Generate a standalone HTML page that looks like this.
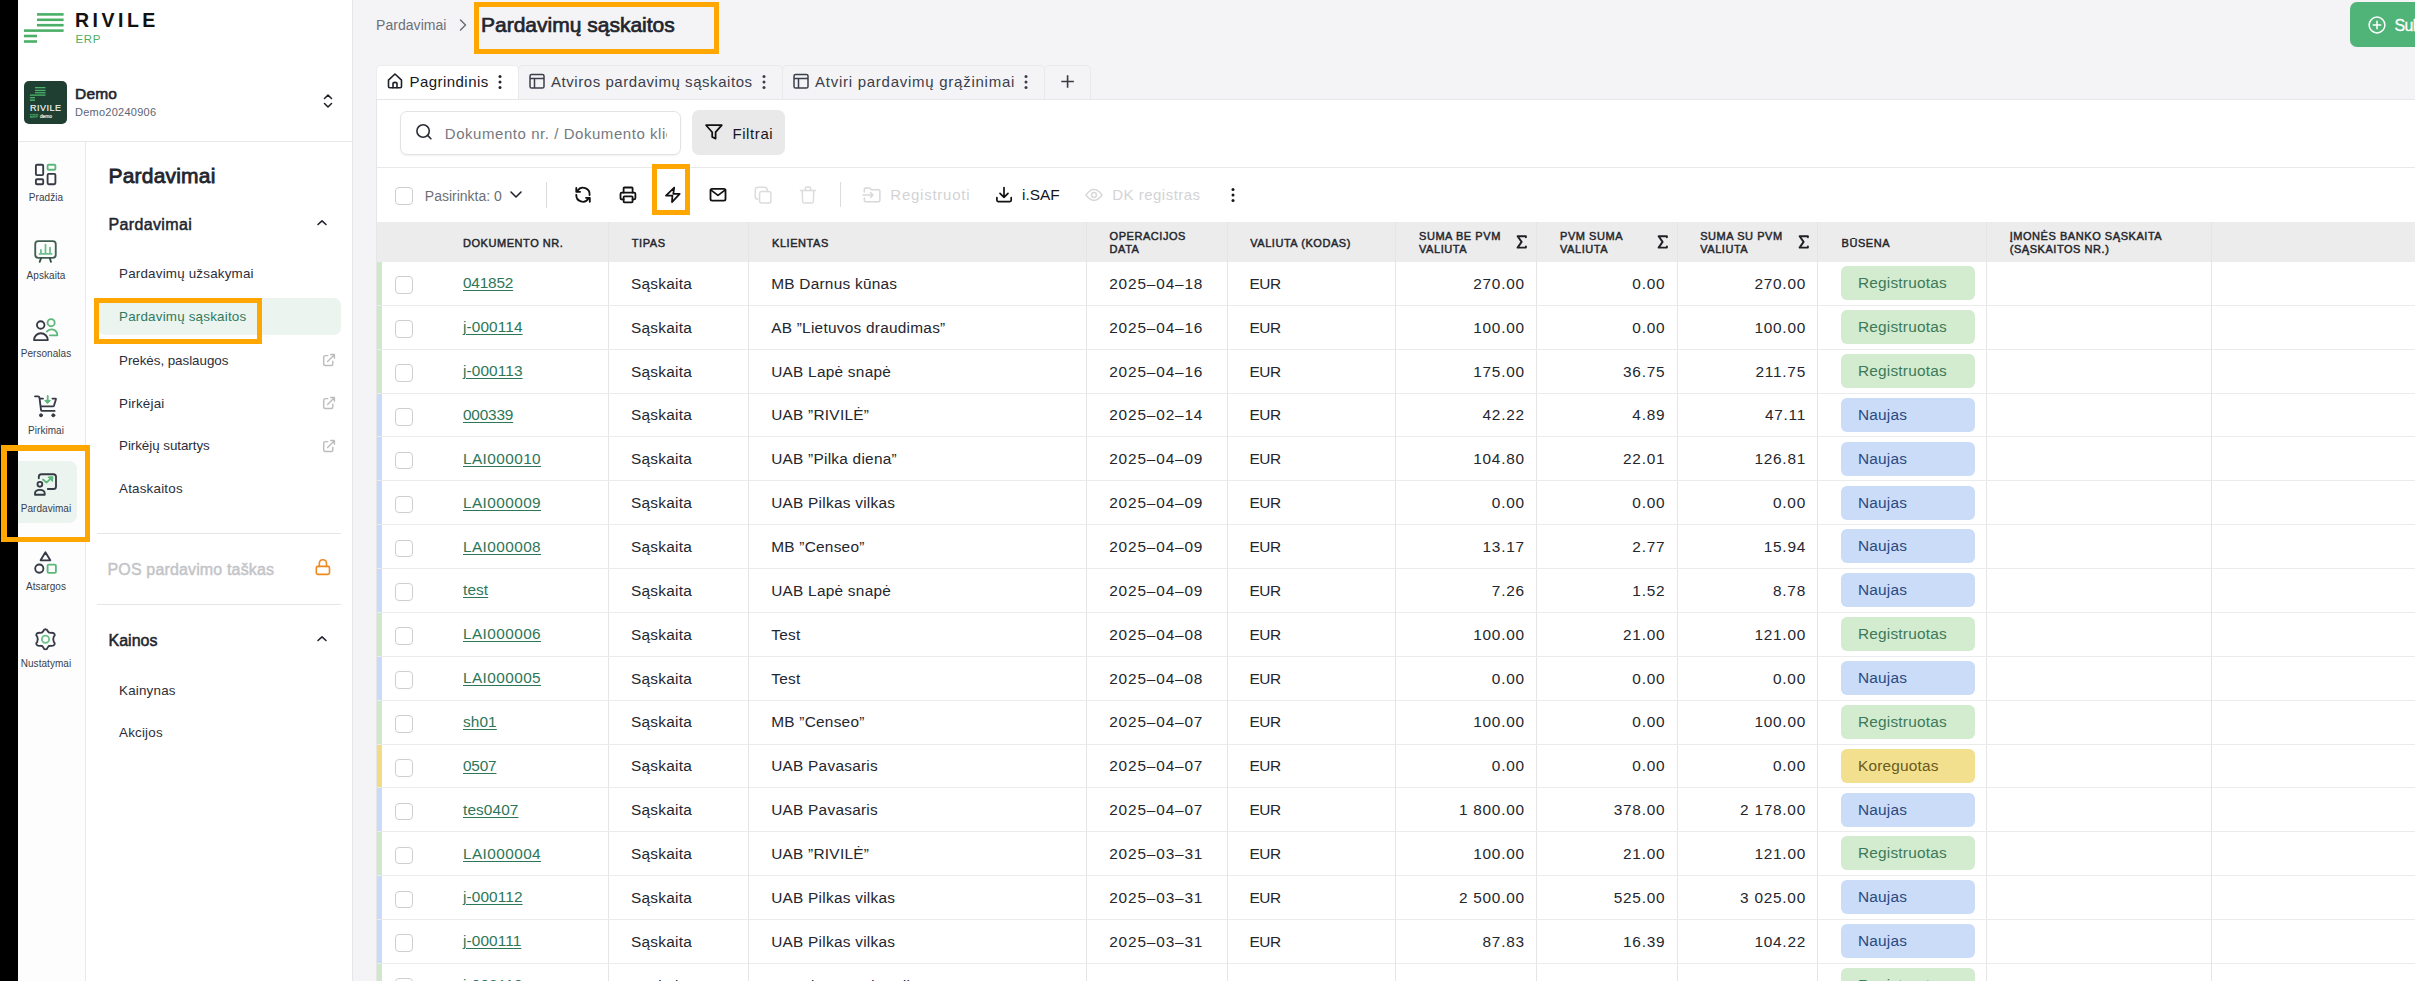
<!DOCTYPE html>
<html><head><meta charset="utf-8"><title>Pardavimų sąskaitos</title>
<style>
*{box-sizing:border-box}
html,body{margin:0;padding:0}
body{width:2415px;height:981px;overflow:hidden;position:relative;background:#f4f4f6;font-family:"Liberation Sans",sans-serif;color:#22252e}
.abs{position:absolute}
#blk{position:absolute;left:0;top:0;width:18px;height:981px;background:#000}
#side{position:absolute;left:18px;top:0;width:335px;height:981px;background:#fff;border-right:1px solid #e6e6e8}
#logoline{position:absolute;left:18px;top:141px;width:334px;height:1px;background:#e8e8ea}
#rail{position:absolute;left:18px;top:142px;width:68px;height:839px;background:#fdfdfd;border-right:1px solid #eaeaea}
.ri{position:absolute}
.rl{position:absolute;left:12.5px;width:67px;text-align:center;font-size:10px;color:#3a3e4a;line-height:14px;letter-spacing:0.05px}
.mi{position:absolute;left:119px;font-size:13.4px;color:#2a2e3a;line-height:16px;white-space:nowrap;letter-spacing:0.2px}
.ext{position:absolute;left:322px}
.ob{position:absolute;border:5px solid #ffa600}
#panel{position:absolute;left:376px;top:99px;width:2040px;height:882px;background:#fff;border-left:1px solid #e6e6e8;border-top:1px solid #e6e6e8}
.tab{position:absolute;top:65px;height:34.5px;border:1px solid #e9e9eb;border-bottom:none;border-radius:5px 5px 0 0;background:#f4f4f6}
.tabt{position:absolute;top:73px;font-size:15px;line-height:18px;color:#3b3e4b;white-space:nowrap;letter-spacing:0.55px}
.thead{position:absolute;left:377px;width:2038px;background:#ececec}
.th{position:absolute;font-size:11px;font-weight:400;-webkit-text-stroke:0.45px #24262c;letter-spacing:0.55px;line-height:13px;color:#24262c;white-space:nowrap}
.sig{position:absolute;font-size:18.5px;line-height:20px;color:#24262c}
.vd{position:absolute;width:1px;background:#e5e5e5}
.row{position:absolute;left:377px;width:2038px}
.bar{position:absolute;left:0;top:0;width:5px;height:100%}
.rb{position:absolute;left:0;bottom:0;width:100%;height:1px;background:#ebebeb}
.cb{position:absolute;left:18.3px;top:14.4px;width:17.6px;height:17.6px;border:1px solid #cfcfd1;border-radius:4px;background:#fff}
.c{position:absolute;top:12.8px;font-size:15.4px;line-height:18px;color:#24262e;white-space:nowrap;letter-spacing:0.25px}
.c.r{letter-spacing:0.75px}
.c.eur{letter-spacing:-0.4px}
.c.dt{letter-spacing:0.85px}
.c.lnk{color:#2e7658;text-decoration:underline;text-decoration-thickness:1px;text-underline-offset:1.6px;letter-spacing:-0.2px;top:12.3px}
.badge{position:absolute;left:1464px;top:4.2px;width:134px;height:34px;border-radius:6px;font-size:15.4px;line-height:34px;padding-left:17px;letter-spacing:0.2px}
.ic{position:absolute}
</style></head><body>
<div id="blk"></div>
<div id="side"></div>
<div id="logoline"></div>
<!-- logo -->
<svg class="abs" style="left:22px;top:11px" width="44" height="34" viewBox="0 0 44 34">
<g fill="#4caf67">
<rect x="15" y="2.1" width="26.6" height="2.6"/>
<rect x="15" y="7.5" width="26.6" height="2.6"/>
<rect x="15" y="12.9" width="26.6" height="2.6"/>
<rect x="2" y="18.3" width="39.6" height="2.6"/>
<rect x="2" y="23.7" width="13" height="2.6"/>
<rect x="2" y="29.2" width="13" height="2.6"/>
</g></svg>
<div class="abs" style="left:75px;top:9px;font-size:19.5px;font-weight:700;letter-spacing:3.5px;color:#111;line-height:22px">RIVILE</div>
<div class="abs" style="left:75.5px;top:32px;font-size:11.5px;letter-spacing:0.6px;color:#4caf67;line-height:14px">ERP</div>
<!-- company -->
<div class="abs" style="left:24px;top:81px;width:43px;height:43px;border-radius:5px;background:#1e3f31"></div>
<svg class="abs" style="left:24px;top:81px" width="43" height="43" viewBox="0 0 43 43">
<g fill="#4caf6a"><rect x="11" y="6" width="10.5" height="1.3"/><rect x="11" y="8.8" width="10.5" height="1.3"/><rect x="11" y="11.1" width="10.5" height="1.3"/><rect x="5.9" y="13.3" width="15.6" height="1.7" fill="#3f9a5c"/><rect x="5.9" y="16" width="5.1" height="1.3"/><rect x="5.9" y="18.4" width="5.1" height="1.5"/></g>
<text x="5.9" y="29.9" font-family="Liberation Sans" font-weight="400" font-size="9" textLength="31.2" lengthAdjust="spacing" fill="#eef2ef" stroke="#eef2ef" stroke-width="0.2">RIVILE</text>
<text x="5.9" y="36.9" font-family="Liberation Sans" font-weight="400" font-size="5.2" textLength="8.3" lengthAdjust="spacingAndGlyphs" fill="#4caf6a" stroke="#4caf6a" stroke-width="0.2">ERP</text><text x="15.9" y="36.9" font-family="Liberation Sans" font-weight="400" font-size="5.6" textLength="12.2" lengthAdjust="spacingAndGlyphs" fill="#e8efe9" stroke="#e8efe9" stroke-width="0.2">demo</text>
</svg>
<div class="abs" style="left:75px;top:84.5px;font-size:15.5px;font-weight:400;-webkit-text-stroke:0.6px #22252e;color:#22252e;line-height:17px;letter-spacing:0.2px">Demo</div>
<div class="abs" style="left:75px;top:106px;font-size:11px;color:#5d6576;line-height:13px;letter-spacing:0.25px">Demo20240906</div>
<svg class="abs" style="left:321px;top:92px" width="14" height="18" viewBox="0 0 14 18" fill="none" stroke="#1d1f24" stroke-width="1.5" stroke-linecap="round" stroke-linejoin="round"><path d="M3.5 6.5 L7 3 L10.5 6.5 M3.5 11.5 L7 15 L10.5 11.5"/></svg>
<div id="rail"></div>
<div class="abs" style="left:18px;top:461px;width:59px;height:62px;background:#ecf4ef;border-radius:0 8px 8px 0"></div>
<svg class="ri" style="left:28px;top:155px" width="36" height="36" viewBox="0 0 36 36" fill="none" stroke-width="1.85" stroke-linejoin="round">
<rect x="7.9" y="9.7" width="7.3" height="10.4" rx="1.1" stroke="#363a45"/>
<rect x="7.9" y="24.2" width="7.3" height="5" rx="1" stroke="#363a45"/>
<rect x="19.6" y="9.7" width="7.8" height="5" rx="1" stroke="#5cb87a"/>
<rect x="19.6" y="18.9" width="7.8" height="10.3" rx="1.1" stroke="#363a45"/>
</svg>
<svg class="ri" style="left:28px;top:233px" width="36" height="36" viewBox="0 0 36 36" fill="none" stroke-width="1.85" stroke-linecap="round" stroke-linejoin="round">
<rect x="7.25" y="8.05" width="20.5" height="16.8" rx="3" stroke="#3f5f51"/>
<path d="M13 25.2 L11.7 28.9 M21.8 25.2 L23 28.9" stroke="#2f4e40" stroke-width="1.8"/>
<path d="M11.6 20.9 H23.6 M12.9 20.9 V17 M17.5 20.9 V11.6 M22 20.9 V14.6" stroke="#6cc08a" stroke-width="1.8"/>
</svg>
<svg class="ri" style="left:28px;top:312px" width="36" height="36" viewBox="0 0 36 36" fill="none" stroke-width="1.85" stroke-linecap="round" stroke-linejoin="round">
<circle cx="12.7" cy="13" r="3.75" stroke="#363a45"/>
<path d="M6 28.1 H19.8 A6.9 6.9 0 0 0 6 28.1 Z" stroke="#363a45"/>
<circle cx="23.1" cy="10.7" r="3.55" stroke="#5cb87a"/>
<path d="M18.8 19.6 A5.9 5.9 0 0 1 29.3 23.3 H21.9" stroke="#5cb87a"/>
</svg>
<svg class="ri" style="left:28px;top:388px" width="36" height="36" viewBox="0 0 36 36" fill="none" stroke-width="1.85" stroke-linecap="round" stroke-linejoin="round">
<path d="M7 8.3 H10 Q11.3 8.3 11.5 9.8 L13 22 Q13.2 22.9 14.2 22.9 H26.6" stroke="#363a45"/>
<path d="M12 10.6 H15 M24.4 10.6 H27.4 Q28.1 10.6 27.9 11.4 L26 17.6 Q25.7 18.3 25 18.3 H13.1" stroke="#363a45"/>
<circle cx="13" cy="27.3" r="1.5" fill="#363a45" stroke="#363a45" stroke-width="1"/>
<circle cx="25.3" cy="27.3" r="1.5" fill="#363a45" stroke="#363a45" stroke-width="1"/>
<path d="M19.7 7.8 V13.5" stroke="#5cb87a" stroke-width="1.8"/>
<path d="M17.1 12.4 H22.3 L19.7 15.4 Z" fill="#5cb87a" stroke="#5cb87a" stroke-width="1"/>
</svg>
<svg class="ri" style="left:28px;top:466px" width="36" height="36" viewBox="0 0 36 36" fill="none" stroke-width="1.85" stroke-linecap="round" stroke-linejoin="round">
<path d="M10.8 12.2 V10.8 Q10.8 8.2 13.4 8.2 H25.4 Q28 8.2 28 10.8 V20.4 Q28 23 25.4 23 H19.8" stroke="#363a45"/>
<circle cx="11.9" cy="18.3" r="2.4" stroke="#363a45"/>
<path d="M7 28.7 V27.6 Q7 23.9 11.9 23.9 Q16.7 23.9 16.7 27.6 V28.7 Z" stroke="#363a45"/>
<path d="M15 13.5 L18.5 16.6 L23.5 11.8" stroke="#5cb87a" stroke-width="1.8"/>
<path d="M20.3 11 L24.9 10.7 L24.5 15.2 Z" fill="#5cb87a" stroke="#5cb87a" stroke-width="1"/>
</svg>
<svg class="ri" style="left:28px;top:544px" width="36" height="36" viewBox="0 0 36 36" fill="none" stroke-width="1.85" stroke-linecap="round" stroke-linejoin="round">
<path d="M17.4 8.2 L22.3 16.3 H12.6 Z" stroke="#363a45"/>
<circle cx="11.3" cy="24.6" r="4.1" stroke="#363a45"/>
<rect x="19.6" y="20.6" width="8.3" height="8.3" rx="1.2" stroke="#5cb87a"/>
</svg>
<svg class="ri" style="left:28px;top:621px" width="36" height="36" viewBox="0 0 36 36" fill="none" stroke-width="1.85" stroke-linecap="round" stroke-linejoin="round">
<path d="M17.5 8.2 Q19.2 8.2 19.6 10 Q20.5 11.9 22.6 11.8 Q25.8 11.4 26.6 13.2 Q27.2 14.6 25.8 15.6 Q24.5 18.3 25.8 21 Q27.2 22 26.6 23.4 Q25.8 25.2 22.6 24.8 Q20.5 24.7 19.6 26.6 Q19.2 28.4 17.5 28.4 Q15.8 28.4 15.4 26.6 Q14.5 24.7 12.4 24.8 Q9.2 25.2 8.4 23.4 Q7.8 22 9.2 21 Q10.5 18.3 9.2 15.6 Q7.8 14.6 8.4 13.2 Q9.2 11.4 12.4 11.8 Q14.5 11.9 15.4 10 Q15.8 8.2 17.5 8.2 Z" stroke="#363a45"/>
<circle cx="17.5" cy="18.3" r="3.6" stroke="#6cc08a" stroke-width="1.8"/>
</svg>
<div class="rl" style="top:190.9px">Pradžia</div>
<div class="rl" style="top:268.9px">Apskaita</div>
<div class="rl" style="top:346.9px">Personalas</div>
<div class="rl" style="top:423.9px">Pirkimai</div>
<div class="rl" style="top:501.9px">Pardavimai</div>
<div class="rl" style="top:579.9px">Atsargos</div>
<div class="rl" style="top:656.9px">Nustatymai</div>
<!-- menu -->
<div class="abs" style="left:108.5px;top:165.2px;font-size:21px;font-weight:400;-webkit-text-stroke:0.8px #22252e;color:#22252e;line-height:22px;letter-spacing:0.2px">Pardavimai</div>
<div class="abs" style="left:108.5px;top:216px;font-size:16px;font-weight:400;-webkit-text-stroke:0.5px #22252e;color:#22252e;line-height:17px;letter-spacing:0.35px">Pardavimai</div>
<svg class="abs" style="left:314px;top:217px" width="16" height="12" viewBox="0 0 16 12" fill="none" stroke="#22252e" stroke-width="1.6" stroke-linecap="round" stroke-linejoin="round"><path d="M4 7.5 L8 3.8 L12 7.5"/></svg>
<div class="mi" style="top:266px">Pardavimų užsakymai</div>
<div class="abs" style="left:98px;top:298px;width:243px;height:37px;background:#ebf4ef;border-radius:7px"></div>
<div class="mi" style="top:309px;color:#2f7a5e">Pardavimų sąskaitos</div>
<div class="mi" style="top:352.5px;letter-spacing:-0.05px">Prekės, paslaugos</div>
<div class="mi" style="top:395.5px">Pirkėjai</div>
<div class="mi" style="top:438.3px;letter-spacing:-0.05px">Pirkėjų sutartys</div>
<div class="mi" style="top:481.2px">Ataskaitos</div>
<svg class="ext" style="top:352.5px" width="14" height="14" viewBox="0 0 14 14" fill="none" stroke="#bdbdbd" stroke-width="1.45" stroke-linecap="round" stroke-linejoin="round"><path d="M5.8 2.6 H3.2 Q1.7 2.6 1.7 4.1 V10.9 Q1.7 12.4 3.2 12.4 H9.3 Q10.8 12.4 10.8 10.9 V8.3"/><path d="M5.6 8.4 L12.3 1.7 M8.7 1.5 H12.4 V5.2"/></svg><svg class="ext" style="top:395.5px" width="14" height="14" viewBox="0 0 14 14" fill="none" stroke="#bdbdbd" stroke-width="1.45" stroke-linecap="round" stroke-linejoin="round"><path d="M5.8 2.6 H3.2 Q1.7 2.6 1.7 4.1 V10.9 Q1.7 12.4 3.2 12.4 H9.3 Q10.8 12.4 10.8 10.9 V8.3"/><path d="M5.6 8.4 L12.3 1.7 M8.7 1.5 H12.4 V5.2"/></svg><svg class="ext" style="top:438.5px" width="14" height="14" viewBox="0 0 14 14" fill="none" stroke="#bdbdbd" stroke-width="1.45" stroke-linecap="round" stroke-linejoin="round"><path d="M5.8 2.6 H3.2 Q1.7 2.6 1.7 4.1 V10.9 Q1.7 12.4 3.2 12.4 H9.3 Q10.8 12.4 10.8 10.9 V8.3"/><path d="M5.6 8.4 L12.3 1.7 M8.7 1.5 H12.4 V5.2"/></svg>
<div class="abs" style="left:97px;top:533px;width:244px;height:1px;background:#e6e6e8"></div>
<div class="abs" style="left:107.5px;top:561px;font-size:16px;font-weight:400;-webkit-text-stroke:0.45px #c3c4c8;color:#c3c4c8;line-height:18px;letter-spacing:0.15px">POS pardavimo taškas</div>
<svg class="abs" style="left:313px;top:557px" width="19" height="20" viewBox="0 0 19 20" fill="none" stroke="#ef891c" stroke-width="1.6" stroke-linecap="round" stroke-linejoin="round"><rect x="3.3" y="9.4" width="13.2" height="8" rx="1.6"/><path d="M6.3 9.4 V6.8 Q6.3 2.7 9.9 2.7 Q13.5 2.7 13.5 6.8 V9.4"/></svg>
<div class="abs" style="left:97px;top:604px;width:244px;height:1px;background:#e6e6e8"></div>
<div class="abs" style="left:108.5px;top:632px;font-size:16px;font-weight:400;-webkit-text-stroke:0.5px #22252e;color:#22252e;line-height:17px">Kainos</div>
<svg class="abs" style="left:314px;top:633px" width="16" height="12" viewBox="0 0 16 12" fill="none" stroke="#22252e" stroke-width="1.6" stroke-linecap="round" stroke-linejoin="round"><path d="M4 7.5 L8 3.8 L12 7.5"/></svg>
<div class="mi" style="top:682.5px">Kainynas</div>
<div class="mi" style="top:725.3px">Akcijos</div>

<!-- breadcrumb -->
<div class="abs" style="left:376px;top:16.5px;font-size:14px;color:#6d6f76;line-height:17px;letter-spacing:0.05px">Pardavimai</div>
<svg class="abs" style="left:456px;top:17px" width="14" height="16" viewBox="0 0 14 16" fill="none" stroke="#6d6f76" stroke-width="1.5" stroke-linecap="round" stroke-linejoin="round"><path d="M4.5 3 L9.5 8 L4.5 13"/></svg>
<div class="abs" style="left:481px;font-size:21px;font-weight:400;-webkit-text-stroke:0.7px #22252e;color:#22252e;line-height:23px;letter-spacing:0px;top:12.5px">Pardavimų sąskaitos</div>

<!-- create button -->
<div class="abs" style="left:2350px;top:2px;width:120px;height:45px;border-radius:7px;background:#50b478"></div>
<svg class="abs" style="left:2367px;top:15px" width="20" height="20" viewBox="0 0 20 20" fill="none" stroke="#fff" stroke-width="1.5" stroke-linecap="round"><circle cx="10" cy="10" r="7.9"/><path d="M10 6.3 V13.7 M6.3 10 H13.7"/></svg>
<div class="abs" style="left:2394.5px;top:15.5px;font-size:16px;color:#fff;-webkit-text-stroke:0.3px #fff;line-height:19px;letter-spacing:-0.6px;white-space:nowrap">Sukurti</div>

<!-- tabs -->
<div class="tab" style="left:376px;width:142.5px;background:#fff;border-color:#ececee"></div>
<div class="tab" style="left:518px;width:264.5px"></div>
<div class="tab" style="left:782px;width:262.5px"></div>
<div class="tab" style="left:1044px;width:47px"></div>
<svg class="abs" style="left:385px;top:71px" width="20" height="20" viewBox="0 0 20 20" fill="none" stroke="#1f2128" stroke-width="1.6" stroke-linecap="round" stroke-linejoin="round"><path d="M3.5 9.2 L10 3 L16.5 9.2 V15.6 Q16.5 16.8 15.3 16.8 H4.7 Q3.5 16.8 3.5 15.6 Z"/><path d="M8 16.8 V12.8 Q8 11.4 10 11.4 Q12 11.4 12 12.8 V16.8"/></svg>
<div class="tabt" style="left:409.5px;color:#15171c;letter-spacing:0.45px">Pagrindinis</div>
<svg class="abs" style="left:496px;top:73px" width="8" height="18" viewBox="0 0 8 18" fill="#22252e"><circle cx="4" cy="3.5" r="1.5"/><circle cx="4" cy="9" r="1.5"/><circle cx="4" cy="14.5" r="1.5"/></svg>
<svg class="abs" style="left:527px;top:72px" width="20" height="18" viewBox="0 0 20 18" fill="none" stroke="#3b3e4b" stroke-width="1.5" stroke-linejoin="round"><rect x="3" y="2.5" width="14" height="13.5" rx="1.6"/><path d="M3 6.5 H17 M7.5 6.5 V16"/></svg>
<div class="tabt" style="left:551px">Atviros pardavimų sąskaitos</div>
<svg class="abs" style="left:760px;top:73px" width="8" height="18" viewBox="0 0 8 18" fill="#3b3e4b"><circle cx="4" cy="3.5" r="1.5"/><circle cx="4" cy="9" r="1.5"/><circle cx="4" cy="14.5" r="1.5"/></svg>
<svg class="abs" style="left:791px;top:72px" width="20" height="18" viewBox="0 0 20 18" fill="none" stroke="#3b3e4b" stroke-width="1.5" stroke-linejoin="round"><rect x="3" y="2.5" width="14" height="13.5" rx="1.6"/><path d="M3 6.5 H17 M7.5 6.5 V16"/></svg>
<div class="tabt" style="left:815px;letter-spacing:0.74px">Atviri pardavimų grąžinimai</div>
<svg class="abs" style="left:1021.5px;top:73px" width="8" height="18" viewBox="0 0 8 18" fill="#3b3e4b"><circle cx="4" cy="3.5" r="1.5"/><circle cx="4" cy="9" r="1.5"/><circle cx="4" cy="14.5" r="1.5"/></svg>
<svg class="abs" style="left:1058px;top:72px" width="20" height="20" viewBox="0 0 20 20" fill="none" stroke="#3b3c42" stroke-width="1.6" stroke-linecap="butt"><path d="M9.6 3.2 V15.8 M3.3 9.5 H15.9"/></svg>

<!-- panel -->
<div id="panel"></div>
<div class="abs" style="left:377px;top:167px;width:2038px;height:1px;background:#e8e8ea"></div>
<!-- search -->
<div class="abs" style="left:400px;top:110.5px;width:280.5px;height:44px;border:1px solid #e3e3e6;border-radius:7px;background:#fff;box-shadow:0 1px 2px rgba(0,0,0,0.06)"></div>
<svg class="abs" style="left:413px;top:121px" width="22" height="22" viewBox="0 0 22 22" fill="none" stroke="#2a2d35" stroke-width="1.6" stroke-linecap="round"><circle cx="10.1" cy="10" r="6.2"/><path d="M14.6 14.4 L17.9 17.8"/></svg>
<div class="abs" style="left:444.8px;top:124.5px;width:222px;overflow:hidden;font-size:15px;line-height:18px;color:#76787e;white-space:nowrap;letter-spacing:0.55px">Dokumento nr. / Dokumento klientas</div>
<div class="abs" style="left:692px;top:110px;width:93px;height:44.6px;border-radius:7px;background:#e9e9ea"></div>
<svg class="abs" style="left:703px;top:122px" width="22" height="20" viewBox="0 0 22 20" fill="none" stroke="#111" stroke-width="1.75" stroke-linejoin="round" stroke-linecap="round"><path d="M3.1 3.2 H18.8 L12.6 10.2 V16.6 L9.2 15 V10.2 Z"/></svg>
<div class="abs" style="left:732.4px;top:124.5px;font-size:15px;line-height:18px;color:#15171c;letter-spacing:0.6px">Filtrai</div>

<!-- toolbar -->
<div class="abs" style="left:395.3px;top:187.2px;width:17.4px;height:17.4px;border:1px solid #cfcfd1;border-radius:4px"></div>
<div class="abs" style="left:424.8px;top:187.5px;font-size:14px;line-height:17px;color:#6d6f76;letter-spacing:0px">Pasirinkta: 0</div>
<svg class="abs" style="left:508px;top:187px" width="16" height="14" viewBox="0 0 16 14" fill="none" stroke="#22252e" stroke-width="1.6" stroke-linecap="round" stroke-linejoin="round"><path d="M3 5 L8 10 L13 5"/></svg>
<div class="abs" style="left:546px;top:181.5px;width:1px;height:26px;background:#dcdcde"></div>
<div class="abs" style="left:839.5px;top:182px;width:1px;height:25px;background:#dcdcde"></div>
<svg class="abs" style="left:571px;top:183px" width="24" height="24" viewBox="0 0 24 24" fill="none" stroke="#111" stroke-width="1.85" stroke-linecap="round" stroke-linejoin="round"><path d="M18.6 12 A6.6 6.6 0 0 0 6.6 7.6"/><path d="M5.3 5 V8.8 H9.1"/><path d="M5.3 11.8 A6.6 6.6 0 0 0 17.5 15.6"/><path d="M18.8 18.7 V14.8 H15"/></svg>
<svg class="abs" style="left:616px;top:183px" width="24" height="24" viewBox="0 0 24 24" fill="none" stroke="#111" stroke-width="1.8" stroke-linecap="round" stroke-linejoin="round"><path d="M7.6 9.6 V5.3 Q7.6 4.5 8.4 4.5 H15.8 Q16.6 4.5 16.6 5.3 V9.6"/><path d="M7.6 16.4 H5.9 Q4.5 16.4 4.5 15 V11.1 Q4.5 9.7 5.9 9.7 H18 Q19.4 9.7 19.4 11.1 V15 Q19.4 16.4 18 16.4 H16.6"/><rect x="7.6" y="13.3" width="9" height="6.1" rx="0.8"/></svg>
<svg class="abs" style="left:660px;top:183px" width="24" height="24" viewBox="0 0 24 24" fill="none" stroke="#111" stroke-width="1.75" stroke-linecap="round" stroke-linejoin="round"><path d="M14.2 4.6 L6 12.7 H12.4 L12 19.1 L19.7 10.8 H13.3 Z"/></svg>
<svg class="abs" style="left:705px;top:183px" width="24" height="24" viewBox="0 0 24 24" fill="none" stroke="#111" stroke-width="1.8" stroke-linecap="round" stroke-linejoin="round"><rect x="5.5" y="5.9" width="15" height="11.8" rx="1.6"/><path d="M5.7 6.9 L13 12.4 L20.3 6.9"/></svg>
<svg class="abs" style="left:751px;top:183px" width="24" height="24" viewBox="0 0 24 24" fill="none" stroke="#dcdcde" stroke-width="1.5" stroke-linecap="round" stroke-linejoin="round"><rect x="8.6" y="8.5" width="11.3" height="11.4" rx="2"/><path d="M16.2 8.5 V7.2 Q16.2 4.3 13.6 4.3 H7 Q4.3 4.3 4.3 7 V13.7 Q4.3 16.2 6.9 16.2"/></svg>
<svg class="abs" style="left:796px;top:183px" width="24" height="24" viewBox="0 0 24 24" fill="none" stroke="#dcdcde" stroke-width="1.5" stroke-linecap="round" stroke-linejoin="round"><path d="M4.4 7.5 H19.5 M6.2 7.5 L6.6 18.2 Q6.7 19.9 8.4 19.9 H15.6 Q17.3 19.9 17.4 18.2 L17.8 7.5 M9.4 7.5 V5.3 Q9.4 4.1 10.6 4.1 H13.4 Q14.6 4.1 14.6 5.3 V7.5"/></svg>
<svg class="abs" style="left:860px;top:183px" width="24" height="24" viewBox="0 0 24 24" fill="none" stroke="#d8d8da" stroke-width="1.5" stroke-linecap="round" stroke-linejoin="round"><path d="M4.3 9 V6.3 Q4.3 5 5.6 5 H9.6 L11.4 6.8 H18.6 Q19.9 6.8 19.9 8.1 V17.3 Q19.9 18.7 18.6 18.7 H5.6 Q4.3 18.7 4.3 17.3 V15"/><path d="M3 12 H13 M10.5 9.5 L13 12 L10.5 14.5"/></svg>
<div class="abs" style="left:890.3px;top:185.5px;font-size:15px;line-height:18px;color:#d3d3d5;letter-spacing:0.75px">Registruoti</div>
<svg class="abs" style="left:992px;top:183px" width="24" height="24" viewBox="0 0 24 24" fill="none" stroke="#111" stroke-width="1.7" stroke-linecap="round" stroke-linejoin="round"><path d="M4.9 14.6 V17.3 Q4.9 18.6 6.2 18.6 H17.9 Q19.2 18.6 19.2 17.3 V14.6 M12 4.6 V14.3 M8 10.3 L12 14.3 L16 10.3"/></svg>
<div class="abs" style="left:1022px;top:185.5px;font-size:15.4px;line-height:18px;color:#15171c;letter-spacing:0px">i.SAF</div>
<svg class="abs" style="left:1082px;top:183px" width="24" height="24" viewBox="0 0 24 24" fill="none" stroke="#d8d8da" stroke-width="1.5" stroke-linecap="round" stroke-linejoin="round"><path d="M3.9 12 Q8 6.6 12 6.6 Q16 6.6 20.1 12 Q16 17.4 12 17.4 Q8 17.4 3.9 12 Z"/><circle cx="12" cy="12" r="2.4"/></svg>
<div class="abs" style="left:1112.3px;top:185.5px;font-size:15px;line-height:18px;color:#d3d3d5;letter-spacing:0.48px">DK registras</div>
<svg class="abs" style="left:1228.8px;top:186px" width="8" height="18" viewBox="0 0 8 18" fill="#15171c"><circle cx="4" cy="3.5" r="1.5"/><circle cx="4" cy="9" r="1.5"/><circle cx="4" cy="14.5" r="1.5"/></svg>

<!-- table -->
<div class="thead" style="top:222.0px;height:40.0px"></div>
<div class="th" style="left:463px;top:237.2px">DOKUMENTO NR.</div>
<div class="th" style="left:631.8px;top:237.2px">TIPAS</div>
<div class="th" style="left:772px;top:237.2px">KLIENTAS</div>
<div class="th" style="left:1109.6px;top:230px">OPERACIJOS<br>DATA</div>
<div class="th" style="left:1250.2px;top:237.2px">VALIUTA (KODAS)</div>
<div class="th" style="left:1419px;top:230px">SUMA BE PVM<br>VALIUTA</div>
<svg class="abs" style="left:1515.3px;top:233px" width="14" height="18" viewBox="0 0 14 18" fill="none" stroke="#1e2026" stroke-width="1.9" stroke-linecap="round" stroke-linejoin="round"><path d="M10.9 4.3 V3.2 H2.6 L6.6 8.9 L2.6 14.6 H10.9 V13.5"/></svg>
<div class="th" style="left:1560px;top:230px">PVM SUMA<br>VALIUTA</div>
<svg class="abs" style="left:1655.7px;top:233px" width="14" height="18" viewBox="0 0 14 18" fill="none" stroke="#1e2026" stroke-width="1.9" stroke-linecap="round" stroke-linejoin="round"><path d="M10.9 4.3 V3.2 H2.6 L6.6 8.9 L2.6 14.6 H10.9 V13.5"/></svg>
<div class="th" style="left:1700.2px;top:230px">SUMA SU PVM<br>VALIUTA</div>
<svg class="abs" style="left:1796.5px;top:233px" width="14" height="18" viewBox="0 0 14 18" fill="none" stroke="#1e2026" stroke-width="1.9" stroke-linecap="round" stroke-linejoin="round"><path d="M10.9 4.3 V3.2 H2.6 L6.6 8.9 L2.6 14.6 H10.9 V13.5"/></svg>
<div class="th" style="left:1841.6px;top:237.2px">BŪSENA</div>
<div class="th" style="left:2009.7px;top:230px">ĮMONĖS BANKO SĄSKAITA<br>(SĄSKAITOS NR.)</div>
<div class="vd" style="left:608.0px;top:222.0px;height:759.0px"></div>
<div class="vd" style="left:747.8px;top:222.0px;height:759.0px"></div>
<div class="vd" style="left:1085.7px;top:222.0px;height:759.0px"></div>
<div class="vd" style="left:1226.7px;top:222.0px;height:759.0px"></div>
<div class="vd" style="left:1395.1px;top:222.0px;height:759.0px"></div>
<div class="vd" style="left:1535.9px;top:222.0px;height:759.0px"></div>
<div class="vd" style="left:1676.9px;top:222.0px;height:759.0px"></div>
<div class="vd" style="left:1816.9px;top:222.0px;height:759.0px"></div>
<div class="vd" style="left:1985.9px;top:222.0px;height:759.0px"></div>
<div class="vd" style="left:2210.9px;top:222.0px;height:759.0px"></div>
<div class="row" style="top:262.00px;height:43.87px"><div class="bar" style="background:#cfe8cb"></div><div class="cb"></div><span class="c lnk" style="left:86px;letter-spacing:-0.2px">041852</span><span class="c" style="left:254px">Sąskaita</span><span class="c" style="left:394.2px">MB Darnus kūnas</span><span class="c dt" style="left:732.2px">2025–04–18</span><span class="c eur" style="left:872.4px">EUR</span><span class="c r" style="right:890.2px">270.00</span><span class="c r" style="right:749.7px">0.00</span><span class="c r" style="right:609px">270.00</span><div class="badge" style="background:#d3ebcf;color:#3c7a59">Registruotas</div><div class="rb"></div></div>
<div class="row" style="top:305.87px;height:43.87px"><div class="bar" style="background:#cfe8cb"></div><div class="cb"></div><span class="c lnk" style="left:86px;letter-spacing:0.1px">j-000114</span><span class="c" style="left:254px">Sąskaita</span><span class="c" style="left:394.2px">AB ”Lietuvos draudimas”</span><span class="c dt" style="left:732.2px">2025–04–16</span><span class="c eur" style="left:872.4px">EUR</span><span class="c r" style="right:890.2px">100.00</span><span class="c r" style="right:749.7px">0.00</span><span class="c r" style="right:609px">100.00</span><div class="badge" style="background:#d3ebcf;color:#3c7a59">Registruotas</div><div class="rb"></div></div>
<div class="row" style="top:349.74px;height:43.87px"><div class="bar" style="background:#cfe8cb"></div><div class="cb"></div><span class="c lnk" style="left:86px;letter-spacing:0.1px">j-000113</span><span class="c" style="left:254px">Sąskaita</span><span class="c" style="left:394.2px">UAB Lapė snapė</span><span class="c dt" style="left:732.2px">2025–04–16</span><span class="c eur" style="left:872.4px">EUR</span><span class="c r" style="right:890.2px">175.00</span><span class="c r" style="right:749.7px">36.75</span><span class="c r" style="right:609px">211.75</span><div class="badge" style="background:#d3ebcf;color:#3c7a59">Registruotas</div><div class="rb"></div></div>
<div class="row" style="top:393.61px;height:43.87px"><div class="bar" style="background:#c9dbf8"></div><div class="cb"></div><span class="c lnk" style="left:86px;letter-spacing:-0.2px">000339</span><span class="c" style="left:254px">Sąskaita</span><span class="c" style="left:394.2px">UAB ”RIVILĖ”</span><span class="c dt" style="left:732.2px">2025–02–14</span><span class="c eur" style="left:872.4px">EUR</span><span class="c r" style="right:890.2px">42.22</span><span class="c r" style="right:749.7px">4.89</span><span class="c r" style="right:609px">47.11</span><div class="badge" style="background:#cadcf8;color:#2a4a7f">Naujas</div><div class="rb"></div></div>
<div class="row" style="top:437.48px;height:43.87px"><div class="bar" style="background:#c9dbf8"></div><div class="cb"></div><span class="c lnk" style="left:86px;letter-spacing:0.4px">LAI000010</span><span class="c" style="left:254px">Sąskaita</span><span class="c" style="left:394.2px">UAB ”Pilka diena”</span><span class="c dt" style="left:732.2px">2025–04–09</span><span class="c eur" style="left:872.4px">EUR</span><span class="c r" style="right:890.2px">104.80</span><span class="c r" style="right:749.7px">22.01</span><span class="c r" style="right:609px">126.81</span><div class="badge" style="background:#cadcf8;color:#2a4a7f">Naujas</div><div class="rb"></div></div>
<div class="row" style="top:481.35px;height:43.87px"><div class="bar" style="background:#c9dbf8"></div><div class="cb"></div><span class="c lnk" style="left:86px;letter-spacing:0.4px">LAI000009</span><span class="c" style="left:254px">Sąskaita</span><span class="c" style="left:394.2px">UAB Pilkas vilkas</span><span class="c dt" style="left:732.2px">2025–04–09</span><span class="c eur" style="left:872.4px">EUR</span><span class="c r" style="right:890.2px">0.00</span><span class="c r" style="right:749.7px">0.00</span><span class="c r" style="right:609px">0.00</span><div class="badge" style="background:#cadcf8;color:#2a4a7f">Naujas</div><div class="rb"></div></div>
<div class="row" style="top:525.22px;height:43.87px"><div class="bar" style="background:#c9dbf8"></div><div class="cb"></div><span class="c lnk" style="left:86px;letter-spacing:0.4px">LAI000008</span><span class="c" style="left:254px">Sąskaita</span><span class="c" style="left:394.2px">MB ”Censeo”</span><span class="c dt" style="left:732.2px">2025–04–09</span><span class="c eur" style="left:872.4px">EUR</span><span class="c r" style="right:890.2px">13.17</span><span class="c r" style="right:749.7px">2.77</span><span class="c r" style="right:609px">15.94</span><div class="badge" style="background:#cadcf8;color:#2a4a7f">Naujas</div><div class="rb"></div></div>
<div class="row" style="top:569.09px;height:43.87px"><div class="bar" style="background:#c9dbf8"></div><div class="cb"></div><span class="c lnk" style="left:86px;letter-spacing:0.1px">test</span><span class="c" style="left:254px">Sąskaita</span><span class="c" style="left:394.2px">UAB Lapė snapė</span><span class="c dt" style="left:732.2px">2025–04–09</span><span class="c eur" style="left:872.4px">EUR</span><span class="c r" style="right:890.2px">7.26</span><span class="c r" style="right:749.7px">1.52</span><span class="c r" style="right:609px">8.78</span><div class="badge" style="background:#cadcf8;color:#2a4a7f">Naujas</div><div class="rb"></div></div>
<div class="row" style="top:612.96px;height:43.87px"><div class="bar" style="background:#cfe8cb"></div><div class="cb"></div><span class="c lnk" style="left:86px;letter-spacing:0.4px">LAI000006</span><span class="c" style="left:254px">Sąskaita</span><span class="c" style="left:394.2px">Test</span><span class="c dt" style="left:732.2px">2025–04–08</span><span class="c eur" style="left:872.4px">EUR</span><span class="c r" style="right:890.2px">100.00</span><span class="c r" style="right:749.7px">21.00</span><span class="c r" style="right:609px">121.00</span><div class="badge" style="background:#d3ebcf;color:#3c7a59">Registruotas</div><div class="rb"></div></div>
<div class="row" style="top:656.83px;height:43.87px"><div class="bar" style="background:#c9dbf8"></div><div class="cb"></div><span class="c lnk" style="left:86px;letter-spacing:0.4px">LAI000005</span><span class="c" style="left:254px">Sąskaita</span><span class="c" style="left:394.2px">Test</span><span class="c dt" style="left:732.2px">2025–04–08</span><span class="c eur" style="left:872.4px">EUR</span><span class="c r" style="right:890.2px">0.00</span><span class="c r" style="right:749.7px">0.00</span><span class="c r" style="right:609px">0.00</span><div class="badge" style="background:#cadcf8;color:#2a4a7f">Naujas</div><div class="rb"></div></div>
<div class="row" style="top:700.70px;height:43.87px"><div class="bar" style="background:#cfe8cb"></div><div class="cb"></div><span class="c lnk" style="left:86px;letter-spacing:0.1px">sh01</span><span class="c" style="left:254px">Sąskaita</span><span class="c" style="left:394.2px">MB ”Censeo”</span><span class="c dt" style="left:732.2px">2025–04–07</span><span class="c eur" style="left:872.4px">EUR</span><span class="c r" style="right:890.2px">100.00</span><span class="c r" style="right:749.7px">0.00</span><span class="c r" style="right:609px">100.00</span><div class="badge" style="background:#d3ebcf;color:#3c7a59">Registruotas</div><div class="rb"></div></div>
<div class="row" style="top:744.57px;height:43.87px"><div class="bar" style="background:#f1dc86"></div><div class="cb"></div><span class="c lnk" style="left:86px;letter-spacing:-0.2px">0507</span><span class="c" style="left:254px">Sąskaita</span><span class="c" style="left:394.2px">UAB Pavasaris</span><span class="c dt" style="left:732.2px">2025–04–07</span><span class="c eur" style="left:872.4px">EUR</span><span class="c r" style="right:890.2px">0.00</span><span class="c r" style="right:749.7px">0.00</span><span class="c r" style="right:609px">0.00</span><div class="badge" style="background:#f2e08f;color:#6a5a1c">Koreguotas</div><div class="rb"></div></div>
<div class="row" style="top:788.44px;height:43.87px"><div class="bar" style="background:#c9dbf8"></div><div class="cb"></div><span class="c lnk" style="left:86px;letter-spacing:0.1px">tes0407</span><span class="c" style="left:254px">Sąskaita</span><span class="c" style="left:394.2px">UAB Pavasaris</span><span class="c dt" style="left:732.2px">2025–04–07</span><span class="c eur" style="left:872.4px">EUR</span><span class="c r" style="right:890.2px">1 800.00</span><span class="c r" style="right:749.7px">378.00</span><span class="c r" style="right:609px">2 178.00</span><div class="badge" style="background:#cadcf8;color:#2a4a7f">Naujas</div><div class="rb"></div></div>
<div class="row" style="top:832.31px;height:43.87px"><div class="bar" style="background:#cfe8cb"></div><div class="cb"></div><span class="c lnk" style="left:86px;letter-spacing:0.4px">LAI000004</span><span class="c" style="left:254px">Sąskaita</span><span class="c" style="left:394.2px">UAB ”RIVILĖ”</span><span class="c dt" style="left:732.2px">2025–03–31</span><span class="c eur" style="left:872.4px">EUR</span><span class="c r" style="right:890.2px">100.00</span><span class="c r" style="right:749.7px">21.00</span><span class="c r" style="right:609px">121.00</span><div class="badge" style="background:#d3ebcf;color:#3c7a59">Registruotas</div><div class="rb"></div></div>
<div class="row" style="top:876.18px;height:43.87px"><div class="bar" style="background:#c9dbf8"></div><div class="cb"></div><span class="c lnk" style="left:86px;letter-spacing:0.1px">j-000112</span><span class="c" style="left:254px">Sąskaita</span><span class="c" style="left:394.2px">UAB Pilkas vilkas</span><span class="c dt" style="left:732.2px">2025–03–31</span><span class="c eur" style="left:872.4px">EUR</span><span class="c r" style="right:890.2px">2 500.00</span><span class="c r" style="right:749.7px">525.00</span><span class="c r" style="right:609px">3 025.00</span><div class="badge" style="background:#cadcf8;color:#2a4a7f">Naujas</div><div class="rb"></div></div>
<div class="row" style="top:920.05px;height:43.87px"><div class="bar" style="background:#c9dbf8"></div><div class="cb"></div><span class="c lnk" style="left:86px;letter-spacing:0.1px">j-000111</span><span class="c" style="left:254px">Sąskaita</span><span class="c" style="left:394.2px">UAB Pilkas vilkas</span><span class="c dt" style="left:732.2px">2025–03–31</span><span class="c eur" style="left:872.4px">EUR</span><span class="c r" style="right:890.2px">87.83</span><span class="c r" style="right:749.7px">16.39</span><span class="c r" style="right:609px">104.22</span><div class="badge" style="background:#cadcf8;color:#2a4a7f">Naujas</div><div class="rb"></div></div>
<div class="row" style="top:963.92px;height:43.87px"><div class="bar" style="background:#cfe8cb"></div><div class="cb"></div><span class="c lnk" style="left:86px;letter-spacing:0.1px">j-000110</span><span class="c" style="left:254px">Sąskaita</span><span class="c" style="left:394.2px">AB ”Lietuvos draudimas”</span><span class="c dt" style="left:732.2px">2025–03–27</span><span class="c eur" style="left:872.4px">EUR</span><span class="c r" style="right:890.2px">73.19</span><span class="c r" style="right:749.7px">15.35</span><span class="c r" style="right:609px">88.54</span><div class="badge" style="background:#d3ebcf;color:#3c7a59">Registruotas</div><div class="rb"></div></div>

<!-- orange highlight boxes -->
<div class="ob" style="left:474px;top:2.2px;width:245px;height:51.8px"></div>
<div class="ob" style="left:94px;top:298px;width:168px;height:46px"></div>
<div class="ob" style="left:652.2px;top:164.1px;width:37.8px;height:50.7px"></div>
<div class="ob" style="left:1px;top:445px;width:89px;height:96.5px;border-width:6px 5px 5px 6px"></div>
</body></html>
